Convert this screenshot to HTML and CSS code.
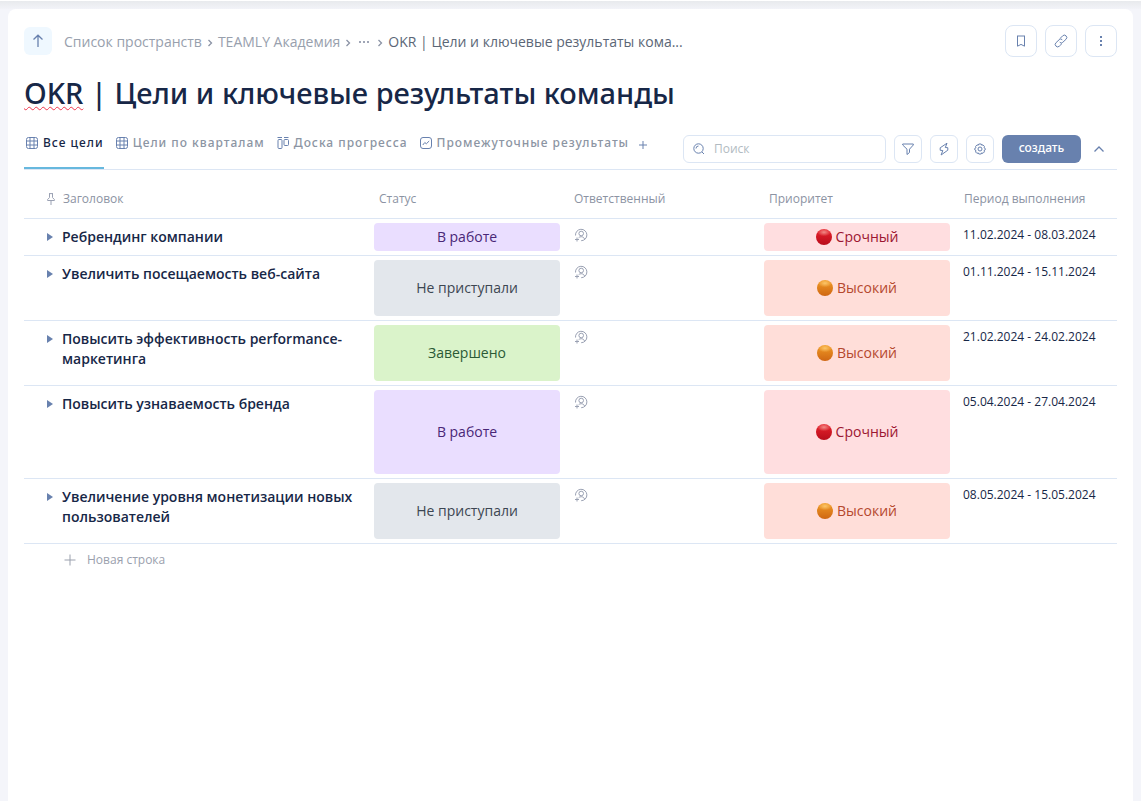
FILE: index.html
```html
<!DOCTYPE html>
<html lang="ru">
<head>
<meta charset="utf-8">
<meta name="viewport" content="width=device-width, initial-scale=1">
<title>OKR | Цели и ключевые результаты команды</title>
<link rel="stylesheet" href="styles.css">
</head>
<body>
<svg class="sprite" aria-hidden="true">
  <symbol id="i-grid" viewBox="0 0 12 12"><rect x=".5" y=".5" width="11" height="11" rx="2"/><path d="M.5 4h11M.5 8h11M4 .5v11M8 .5v11"/></symbol>
  <symbol id="i-chevron" viewBox="0 0 6 8"><path d="M1.500 1l3 3-3 3"/></symbol>
  <symbol id="i-assign" viewBox="0 0 14 14"><path d="M1.500 7.500A5.700 5.700 0 1 1 7.200 12.700M10.600 11.200C10 9.400 8.700 8.700 7.200 8.700c-1.200 0-2 .4-2.600 1.100"/><circle cx="7.200" cy="5.500" r="2.300"/><path d="M3 9.500v4M1 11.500h4"/></symbol>
  <symbol id="i-plus" viewBox="0 0 12 12"><path d="M6 .5v11M.5 6h11"/></symbol>
</svg>
<div class="topbar"></div>
<main class="page">
  <header class="head">
    <a class="up" href="#" aria-label="Наверх"><svg class="icon up-icon" viewBox="0 0 12 14"><path d="M6 13V1.500M1.500 5.500L6 1.200l4.500 4.300"/></svg></a>
    <nav class="crumbs" aria-label="Навигация">
      <a href="#">Список пространств</a>
      <svg class="icon chevron"><use href="#i-chevron"/></svg>
      <a href="#">TEAMLY Академия</a>
      <svg class="icon chevron"><use href="#i-chevron"/></svg>
      <button class="dots" aria-label="Показать путь"><svg viewBox="0 0 10 2"><path d="M0 0h2v2H0zM4 0h2v2H4zM8 0h2v2H8z"/></svg></button>
      <svg class="icon chevron"><use href="#i-chevron"/></svg>
      <span class="current">OKR | Цели и ключевые результаты кома...</span>
    </nav>
    <div class="actions">
      <button class="square" aria-label="В закладки"><svg class="icon bookmark" viewBox="0 0 10 12"><path d="M1.500 1v10.200L5 9.400l3.500 1.800V1"/><path d="M1 1h8"/></svg></button>
      <button class="square" aria-label="Ссылка"><svg class="icon link" viewBox="0 0 14 14"><path d="M6 4.500l2.600-2.600a2.300 2.300 0 0 1 3.500 3.300L8.800 8.300a2.100 2.100 0 0 1-3.100-.1M8 9.500l-2.600 2.600a2.300 2.300 0 0 1-3.500-3.300l3.300-3.100a2.100 2.100 0 0 1 3.100.1"/></svg></button>
      <button class="square" aria-label="Ещё"><svg class="more" viewBox="0 0 2 10"><path d="M0 0h2v2H0zM0 4h2v2H0zM0 8h2v2H0z"/></svg></button>
    </div>
  </header>

  <h1 class="title"><span class="misspelled">OKR</span> | Цели и ключевые результаты команды</h1>

  <div class="toolbar">
    <nav class="tabs" aria-label="Представления">
      <a class="tab active" href="#"><svg class="icon grid"><use href="#i-grid"/></svg>Все цели</a>
      <a class="tab" href="#"><svg class="icon grid"><use href="#i-grid"/></svg>Цели по кварталам</a>
      <a class="tab" href="#"><svg class="icon grid" viewBox="0 0 12 12"><path d="M.5 .5H5M7 .5h4.500"/><rect x="1" y="2.500" width="4" height="9" rx="1"/><rect x="7" y="2.500" width="4.500" height="6" rx="1"/></svg>Доска прогресса</a>
      <a class="tab" href="#"><svg class="icon grid" viewBox="0 0 12 12"><rect x=".5" y=".5" width="11" height="11" rx="2.500"/><path d="M2.800 8l2-2.500 1.500 1.300L9.200 4"/></svg>Промежуточные результаты</a>
      <button class="add-tab" aria-label="Добавить представление"><svg class="icon" viewBox="0 0 8 8"><path d="M4 0v8M0 4h8"/></svg></button>
    </nav>
    <div class="tools">
      <label class="search"><svg class="icon" viewBox="0 0 12 12"><circle cx="5.500" cy="5.500" r="4.700"/><path d="M9 9l2 2M3 5.500A2.500 2.500 0 0 1 5.500 3"/></svg><input type="search" placeholder="Поиск" aria-label="Поиск"></label>
      <button class="tool" aria-label="Фильтр"><svg class="icon" viewBox="0 0 12 12"><path d="M.7 1h10.600v1L7.500 6.200v3.300L5 11.500V6.200L.7 2z"/></svg></button>
      <button class="tool" aria-label="Автоматизация"><svg class="icon bolt" viewBox="0 0 10 14"><path d="M8 1.200L1.200 5.800v2.500l2.600.2-1.700 4.500 6.700-4.800V5.700L6.300 5.500z"/></svg></button>
      <button class="tool" aria-label="Настройки"><svg class="icon" viewBox="0 0 12 12"><path d="M4.800 1h2.400l.5 1.200 1.300-.3 1.400 1.500-.4 1.300 1.200.7v1.500l-1.200.7.4 1.300-1.400 1.400-1.400-.4L7.200 11H4.800l-.5-1.100-1.400.4L1.600 9 2 7.600.8 6.900V5.400L2 4.700l-.4-1.300L3 1.900l1.300.3z"/><circle cx="6" cy="6" r="2"/></svg></button>
      <button class="create">создать</button>
      <button class="collapse" aria-label="Свернуть"><svg class="icon" viewBox="0 0 10 6"><path d="M.5 5.500L5 1l4.500 4.500"/></svg></button>
    </div>
  </div>

  <table class="goals">
    <colgroup><col class="c-title"><col class="c-mid"><col class="c-mid"><col class="c-mid"><col></colgroup>
    <thead>
      <tr>
        <th><span class="pinned"><svg class="icon" viewBox="0 0 8 12"><path d="M2 .6h4M2.500.6v4L.6 6.500v1h6.800v-1L5.500 4.600v-4M4 7.500V12"/></svg>Заголовок</span></th>
        <th>Статус</th><th>Ответственный</th><th>Приоритет</th><th>Период выполнения</th>
      </tr>
    </thead>
    <tbody>
      <tr>
        <td><div class="name"><button class="expand" aria-label="Развернуть"></button><span>Ребрендинг компании</span></div></td>
        <td><div class="tag working">В работе</div></td>
        <td><button class="assign" aria-label="Назначить"><svg class="icon"><use href="#i-assign"/></svg></button></td>
        <td><div class="tag urgent"><i class="dot"></i>Срочный</div></td>
        <td><div class="period">11.02.2024 - 08.03.2024</div></td>
      </tr>
      <tr>
        <td><div class="name"><button class="expand" aria-label="Развернуть"></button><span>Увеличить посещаемость веб-сайта</span></div></td>
        <td><div class="tag tall idle">Не приступали</div></td>
        <td><button class="assign" aria-label="Назначить"><svg class="icon"><use href="#i-assign"/></svg></button></td>
        <td><div class="tag tall high"><i class="dot"></i>Высокий</div></td>
        <td><div class="period">01.11.2024 - 15.11.2024</div></td>
      </tr>
      <tr>
        <td><div class="name"><button class="expand" aria-label="Развернуть"></button><span>Повысить эффективность performance-маркетинга</span></div></td>
        <td><div class="tag tall done">Завершено</div></td>
        <td><button class="assign" aria-label="Назначить"><svg class="icon"><use href="#i-assign"/></svg></button></td>
        <td><div class="tag tall high"><i class="dot"></i>Высокий</div></td>
        <td><div class="period">21.02.2024 - 24.02.2024</div></td>
      </tr>
      <tr>
        <td><div class="name"><button class="expand" aria-label="Развернуть"></button><span>Повысить узнаваемость бренда</span></div></td>
        <td><div class="tag taller working">В работе</div></td>
        <td><button class="assign" aria-label="Назначить"><svg class="icon"><use href="#i-assign"/></svg></button></td>
        <td><div class="tag taller urgent"><i class="dot"></i>Срочный</div></td>
        <td><div class="period">05.04.2024 - 27.04.2024</div></td>
      </tr>
      <tr>
        <td><div class="name"><button class="expand" aria-label="Развернуть"></button><span>Увеличение уровня монетизации новых пользователей</span></div></td>
        <td><div class="tag tall idle">Не приступали</div></td>
        <td><button class="assign" aria-label="Назначить"><svg class="icon"><use href="#i-assign"/></svg></button></td>
        <td><div class="tag tall high"><i class="dot"></i>Высокий</div></td>
        <td><div class="period">08.05.2024 - 15.05.2024</div></td>
      </tr>
    </tbody>
  </table>
  <button class="new-row"><svg class="icon"><use href="#i-plus"/></svg>Новая строка</button>
</main>
</body>
</html>
```
FILE: styles.css
```css
* { box-sizing: border-box; }
body {
  margin: 0;
  min-height: 100vh;
  display: flex;
  flex-direction: column;
  background: #f4f5fa;
  color: #172747;
  font: 14px/20px "Open Sans", "Noto Sans", sans-serif;
}
button, input { font: inherit; color: inherit; }
button { padding: 0; border: 0; background: none; display: flex; align-items: center; justify-content: center; cursor: pointer; }
a { color: inherit; text-decoration: none; }
svg { display: block; flex: none; }
.sprite { position: absolute; width: 0; height: 0; }
.icon { fill: none; stroke: #6881ae; stroke-width: 1; }

.topbar { height: 9px; border-top: 1px solid #fff; background: linear-gradient(#e8eaed, #f2f3f8); }
.page { flex: 1; margin: 0 8px; padding: 16px; border-radius: 8px 8px 0 0; background: #fff; }

.head { display: flex; align-items: center; height: 32px; }
.up { display: grid; place-items: center; width: 28px; height: 28px; border-radius: 6px; background: #eff8ff; }
.up-icon { width: 12px; height: 14px; stroke-width: 1.3; }
.crumbs { flex: 1; display: flex; align-items: center; gap: 5px; margin-left: 12px; padding-top: 2px; color: #98a0ad; white-space: nowrap; }
.chevron { width: 6px; height: 8px; margin-top: 1px; stroke: #8b93a5; stroke-width: 1.3; }
.dots { width: 16px; height: 20px; }
.dots svg { width: 10px; height: 2px; fill: #a0a6b6; }
.current { color: #5b6676; }
.actions { display: flex; gap: 8px; }
.square { width: 32px; height: 32px; border: 1px solid #dce6f4; border-radius: 8px; }
.bookmark { width: 10px; height: 12px; }
.link { width: 14px; height: 14px; }
.more { width: 2px; height: 10px; fill: #6881ae; }

.title { margin: 16px 0 21px; font-family: "Noto Sans", sans-serif; font-size: 29px; line-height: 40px; font-weight: 500; }
.misspelled { text-decoration: underline wavy #f0364c 1px; text-decoration-skip-ink: none; text-underline-offset: 2px; }

.toolbar { display: flex; justify-content: space-between; height: 36px; border-bottom: 1px solid #dce6f4; }
.tabs { display: flex; gap: 10px; }
.tab { display: flex; align-items: flex-start; gap: 5px; padding-left: 2px; font-family: "Noto Sans", sans-serif; font-size: 12px; line-height: 18px; font-weight: 500; letter-spacing: 1px; color: #8c95a3; white-space: nowrap; }
.active { color: #172747; border-bottom: 2px solid #67b8de; }
.grid { width: 12px; height: 12px; margin-top: 3px; }
.add-tab { width: 8px; height: 22px; }
.add-tab svg { width: 8px; height: 8px; }
.tools { display: flex; gap: 8px; padding: 1px 8px 0 0; }
.search { display: flex; align-items: center; gap: 9px; width: 203px; height: 28px; padding: 0 9px; border: 1px solid #dce6f4; border-radius: 6px; }
.search svg { width: 12px; height: 12px; }
.search input { width: 100%; min-width: 0; padding: 0; border: 0; outline: 0; background: none; font-size: 12px; }
.search input::placeholder { color: #b2bbc2; }
.tool { width: 28px; height: 28px; border: 1px solid #dce6f4; border-radius: 6px; }
.tool svg { width: 12px; height: 12px; }
.tool .bolt { width: 10px; height: 14px; }
.create { width: 79px; height: 28px; padding-bottom: 2px; border-radius: 6px; background: #6881ae; color: #fff; font-family: "Noto Sans", sans-serif; font-size: 12px; font-weight: 500; }
.collapse { width: 20px; height: 28px; }
.collapse svg { width: 10px; height: 6px; stroke-width: 1.3; }

.goals { width: 100%; table-layout: fixed; border-collapse: separate; border-spacing: 0; }
.c-title { width: 345px; }
.c-mid { width: 195px; }
.goals th { height: 49px; padding: 9px 10px 0; border-bottom: 1px solid #dce6f4; text-align: left; font-size: 12px; font-weight: 400; color: #8c93a3; }
.goals td { padding: 4px 4px 4px 5px; vertical-align: top; border-bottom: 1px solid #dce6f4; }
.pinned { display: flex; align-items: center; gap: 8px; padding-left: 13px; }
.pinned svg { width: 8px; height: 12px; stroke: #9aa1b3; }
.name { display: flex; gap: 9px; padding: 4px 0 0 18px; font-weight: 600; }
.expand { flex: none; width: 6px; height: 8px; margin-top: 6px; background: #6881ae; clip-path: polygon(0 0, 100% 50%, 0 100%); }
.tag { display: flex; align-items: center; justify-content: center; gap: 4px; height: 28px; border-radius: 4px; }
.tall { height: 56px; }
.taller { height: 84px; }
.working { background: #eadeff; color: #492777; }
.idle { background: #e3e7ec; color: #3c4652; }
.done { background: #daf3ca; color: #2b5a36; }
.urgent { background: #ffdee0; color: #9c1631; }
.high { background: #ffded9; color: #b5482e; }
.dot { width: 16px; height: 16px; border-radius: 50%; }
.urgent .dot { background: radial-gradient(ellipse 7px 4px at 50% 20%, #f08a86, transparent), linear-gradient(#e8222c, #b80d1c); }
.high .dot { background: radial-gradient(ellipse 7px 4px at 50% 20%, #fcc66a, transparent), linear-gradient(#f09a25, #cf6713); }
.assign { width: 14px; height: 14px; margin: 5px 0 0 5px; }
.assign svg { width: 14px; height: 14px; stroke: #9aa1b3; }
.period { padding: 2px 0 0 4px; font-size: 12px; white-space: nowrap; }
.new-row { gap: 11px; margin: 6px 0 0 40px; font-size: 12px; color: #9aa0ad; }
.new-row svg { width: 12px; height: 12px; stroke: #9aa0ad; }
```
